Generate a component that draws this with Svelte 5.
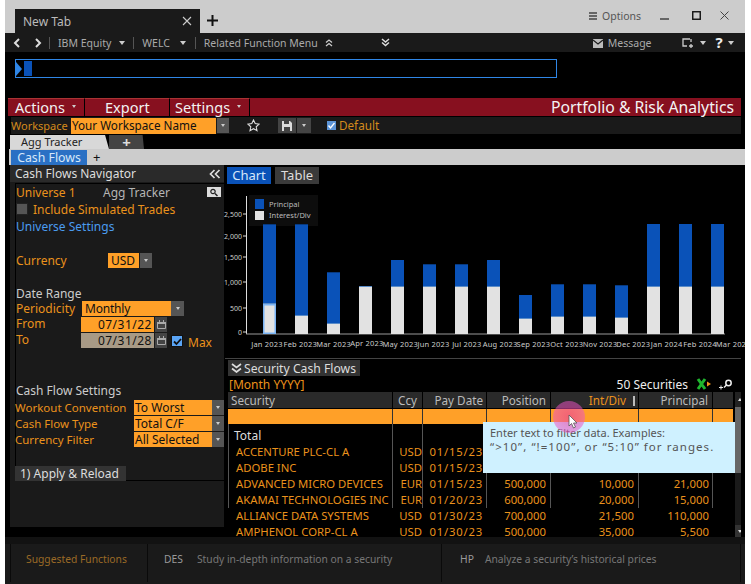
<script>
  const bars = [
    { m: 'Jan 2023', p: 110, i: 30, sel: true, dark: true },
    { m: 'Feb 2023', p: 110, i: 18, dark: true },
    { m: 'Mar 2023', p: 62, i: 10, dark: true },
    { m: 'Apr 2023', p: 48, i: 47, up: true },
    { m: 'May 2023', p: 74, i: 47 },
    { m: 'Jun 2023', p: 70, i: 47, dark: true },
    { m: 'Jul 2023', p: 70, i: 47, dark: true },
    { m: 'Aug 2023', p: 74, i: 47 },
    { m: 'Sep 2023', p: 39, i: 15 },
    { m: 'Oct 2023', p: 50, i: 17, dark: true },
    { m: 'Nov 2023', p: 50, i: 17, dark: true },
    { m: 'Dec 2023', p: 49, i: 16, dark: true },
    { m: 'Jan 2024', p: 110, i: 47 },
    { m: 'Feb 2024', p: 110, i: 47 },
    { m: 'Mar 2024', p: 110, i: 47 }
  ];
  const axis = [
    ['0', 148], ['500', 124], ['1,000', 98], ['1,500', 73], ['2,000', 52], ['2,500', 30]
  ];
  const base = 150;
  const rows = [
    ['ACCENTURE PLC-CL A', 'USD', '01/15/23', '', '', ''],
    ['ADOBE INC', 'USD', '01/15/23', '', '', ''],
    ['ADVANCED MICRO DEVICES', 'EUR', '01/15/23', '500,000', '10,000', '21,000'],
    ['AKAMAI TECHNOLOGIES INC', 'EUR', '01/20/23', '600,000', '20,000', '15,000'],
    ['ALLIANCE DATA SYSTEMS', 'USD', '01/30/23', '700,000', '21,500', '110,000'],
    ['AMPHENOL CORP-CL A', 'USD', '01/30/23', '500,000', '35,000', '5,500']
  ];
  const settings = [
    ['Workout Convention', 'To Worst'],
    ['Cash Flow Type', 'Total C/F'],
    ['Currency Filter', 'All Selected']
  ];
</script>

<div class="page">
  <div class="window">
    <div class="tabbar">
      <div class="tab">
        <span>New Tab</span>
        <svg class="x" viewBox="0 0 10 10" width="10" height="10"><path d="M1 1l8 8M9 1l-8 8" stroke="#ccc" stroke-width="1.100" fill="none" /></svg>
      </div>
      <svg class="newtab" viewBox="0 0 11 11" width="11" height="11"><path d="M5.500 0v11M0 5.500h11" stroke="#111" stroke-width="2" /></svg>
      <div class="winctl">
        <svg viewBox="0 0 8 8" width="8" height="8"><path d="M0 1h8M0 4h8M0 7h8" stroke="#444" stroke-width="1.600" /></svg>
        <span class="opt">Options</span>
        <svg class="min" viewBox="0 0 10 10" width="10" height="10"><path d="M0 7h9" stroke="#666" stroke-width="2" /></svg>
        <svg class="max" viewBox="0 0 9 9" width="9" height="9"><rect x="0.750" y="0.750" width="7.500" height="7.500" fill="none" stroke="#111" stroke-width="1.400" /></svg>
        <svg class="cl" viewBox="0 0 9 9" width="9" height="9"><path d="M.5.5l8 8M8.500.5l-8 8" stroke="#444" stroke-width="1" /></svg>
      </div>
    </div>

    <div class="nav">
      <svg viewBox="0 0 8 10" width="8" height="10"><path d="M6 1L2 5l4 4" stroke="#ddd" stroke-width="2" fill="none" /></svg>
      <svg class="n2" viewBox="0 0 8 10" width="8" height="10"><path d="M2 1l4 4-4 4" stroke="#ddd" stroke-width="2" fill="none" /></svg>
      <i class="sep s1"></i>
      <span class="ni">IBM Equity</span><b class="tri t-ibm"></b>
      <i class="sep s2"></i>
      <span class="ni">WELC</span><b class="tri t-welc"></b>
      <i class="sep s3"></i>
      <span class="ni">Related Function Menu</span>
      <svg class="chev" viewBox="0 0 8 8" width="8" height="8"><path d="M1 3.500L4 1l3 2.500M1 7L4 4.500 7 7" stroke="#ccc" stroke-width="1.300" fill="none" /></svg>
      <svg class="chev big" viewBox="0 0 9 9" width="9" height="9"><path d="M1 1l3.500 3L8 1M1 4.500l3.500 3 3.500-3" stroke="#ddd" stroke-width="1.500" fill="none" /></svg>
      <svg class="mail" viewBox="0 0 10 10" width="10" height="10"><path d="M0 1h10v9H0z" fill="#bbb" /><path d="M0 2l5 4 5-4" stroke="#1a1a1a" stroke-width="1.200" fill="none" /></svg>
      <span class="ni msg">Message</span>
      <svg class="share" viewBox="0 0 12 10" width="12" height="10"><path d="M8 1H1v7h4M9 1v3M7 8h4M9 6v4" stroke="#ccc" stroke-width="1.300" fill="none" /></svg>
      <b class="tri t2"></b>
      <span class="q">?</span>
      <b class="tri t3"></b>
    </div>

    <div class="cmd">
      <div class="cmdbox">
        <svg viewBox="0 0 7 14" width="7" height="14"><path d="M0 0l6 7-6 7z" fill="#2f86e6" /></svg>
        <i class="cursor"></i>
      </div>
    </div>

    <div class="redbar">
      <div class="rb act">Actions<b class="tri tw"></b></div>
      <div class="rb exp">Export</div>
      <div class="rb set">Settings<b class="tri tw"></b></div>
      <div class="title">Portfolio &amp; Risk Analytics</div>
    </div>

    <div class="wsbar">
      <span class="wl">Workspace</span>
      <span class="wname">Your Workspace Name</span>
      <span class="drop d13"><b class="tri tw"></b></span>
      <svg class="star" viewBox="0 0 13 13" width="13" height="13"><path d="M6.500 1l1.700 3.600 3.900.5-2.900 2.700.8 3.900-3.500-2-3.500 2 .8-3.900L.9 5.100l3.900-.5z" fill="none" stroke="#ddd" stroke-width="1.100" /></svg>
      <span class="save"><svg viewBox="0 0 10 10" width="10" height="10"><path d="M0 0h8l2 2v8H0z" fill="#ddd" /><path d="M2 0h5v3H2z" fill="#444" /><path d="M2 6h6v4H2z" fill="#444" /></svg></span>
      <span class="drop d14"><b class="tri tw"></b></span>
      <span class="chk"><svg viewBox="0 0 9 9" width="9" height="9"><path d="M1.500 4.500l2 2.500 4-5" stroke="#fff" stroke-width="1.300" fill="none" /></svg></span>
      <span class="def">Default</span>
    </div>

    <div class="tabs1">
      <div class="t1 on">Agg Tracker</div>
      <div class="t1 plus">+</div>
    </div>
    <div class="tabs2">
      <div class="cf">Cash Flows</div>
      <div class="cfplus">+</div>
    </div>

    <div class="main">
      <aside class="side">
        <div class="sidehead">
          <span>Cash Flows Navigator</span>
          <svg viewBox="0 0 12 10" width="12" height="10"><path d="M5.500 1L1.500 5l4 4M10.500 1l-4 4 4 4" stroke="#ddd" stroke-width="1.700" fill="none" /></svg>
        </div>
        <div class="sidebody">
          <div class="sr u1">
            <span class="or ul">Universe 1</span>
            <span class="agg">Agg Tracker</span>
            <span class="srch"><svg viewBox="0 0 10 9" width="10" height="9"><circle cx="4" cy="3.500" r="2.200" fill="none" stroke="#222" stroke-width="1.200" /><path d="M6 5.500l2.500 2.500" stroke="#222" stroke-width="1.500" /></svg></span>
          </div>
          <div class="sr inc"><i class="box"></i><span class="or">Include Simulated Trades</span></div>
          <div class="sr blue">Universe Settings</div>
          <div class="sr cur">
            <span class="or cl-l">Currency</span>
            <span class="ff usd">USD</span>
            <span class="drop d-usd"><b class="tri tw"></b></span>
          </div>
          <div class="sr grey dr">Date Range</div>
          <div class="sr per">
            <span class="or pl">Periodicity</span>
            <span class="ff mon">Monthly</span>
            <span class="drop d-mon"><b class="tri tw"></b></span>
          </div>
          <div class="sr dt">
            <span class="or lab">From</span>
            <span class="ff date">07/31/22</span>
            <span class="cal"><svg viewBox="0 0 9 9" width="9" height="9"><path d="M.5 2.500h8v6h-8z" fill="none" stroke="#aaa" /><path d="M0 2h9v2H0zM2 0h1v2H2zM6 0h1v2H6z" fill="#aaa" /></svg></span>
          </div>
          <div class="sr dt">
            <span class="or lab">To</span>
            <span class="ff date dis">07/31/28</span>
            <span class="cal"><svg viewBox="0 0 9 9" width="9" height="9"><path d="M.5 2.500h8v6h-8z" fill="none" stroke="#aaa" /><path d="M0 2h9v2H0zM2 0h1v2H2zM6 0h1v2H6z" fill="#aaa" /></svg></span>
            <span class="maxchk"><svg viewBox="0 0 9 9" width="9" height="9"><path d="M1 4.500l2.500 2.500L8 2" stroke="#111" stroke-width="1.800" fill="none" /></svg></span>
            <span class="or maxl">Max</span>
          </div>
          <div class="sr grey cfs">Cash Flow Settings</div>
          {#each settings as s}
            <div class="sr set3">
              <span class="or sl">{s[0]}</span>
              <span class="ff sv">{s[1]}</span>
              <span class="drop d-set"><b class="tri tw"></b></span>
            </div>
          {/each}
          <div class="apply">1) Apply &amp; Reload</div>
        </div>
      </aside>

      <section class="right">
        <div class="cttabs">
          <span class="ct on">Chart</span>
          <span class="ct">Table</span>
        </div>
        <svg class="chart" viewBox="0 0 520 174" width="520" height="174">
          <line x1="21.500" y1="12" x2="21.500" y2={base} stroke="#ddd" />
          <line x1="21" y1="150" x2="500" y2="150" stroke="#999" />
          {#each axis as a}
            <text x="17" y={a[1] + 2.500} class="ax" text-anchor="end">{a[0]}</text>
            <line x1="18" x2="21" y1={a[1]} y2={a[1]} stroke="#ddd" />
          {/each}
          <rect x="24" y="11" width="69" height="31" fill="#0d0d0d" />
          <rect x="30" y="15" width="9" height="10" fill="#0a52b8" />
          <rect x="30" y="27" width="9" height="9" fill="#e2e2e2" />
          <text x="44" y="22.500" class="lg">Principal</text>
          <text x="44" y="34" class="lg">Interest/Div</text>
          {#each bars as b, idx}
            {@const x = 38 + idx * 32}
            <rect x={x} y={base - b.p} width="13" height={b.p} fill="#0a52b8" />
            {#if b.dark}
              <rect x={x} y={base - b.p} width="13" height={1} fill="#083a80" />
            {/if}
            <rect x={x} y={base - b.i - 1} width="13" height="1" fill="#5a8cc8" />
            <rect x={x} y={base - b.i} width="13" height={b.i} fill="#e2e2e2" />
            {#if b.sel}
              <rect x={x + 0.750} y={base - b.i + 0.750} width="11.500" height={b.i - 1.500} fill="none" stroke="#7ab4f5" stroke-width="1.500" />
            {/if}
            <text x={42 + idx * 33.300} y={b.up ? 162 : 163} class="mo" text-anchor="middle">{b.m}</text>
          {/each}
        </svg>
        <div class="rule"></div>
        <div class="shead">
          <svg viewBox="0 0 11 10" width="11" height="10"><path d="M1 1l4.500 3.500L10 1M1 5.500L5.500 9 10 5.500" stroke="#ddd" stroke-width="1.700" fill="none" /></svg>
          <span>Security Cash Flows</span>
        </div>
        <div class="subbar">
          <span class="or">[Month YYYY]</span>
          <span class="cnt">50 Securities</span>
          <svg class="xl" viewBox="0 0 15 12" width="15" height="12"><path d="M2 1l7 10M9 1L2 11" stroke="#1fb52e" stroke-width="3" fill="none" /><path d="M11 3.500l4 2.500-4 2.500z" fill="#f0961e" /></svg>
          <svg class="zoom" viewBox="0 0 14 11" width="14" height="11"><circle cx="9.500" cy="4" r="2.700" fill="none" stroke="#eee" stroke-width="1.500" /><path d="M7.500 6L5 8.500" stroke="#eee" stroke-width="1.500" /><path d="M0 8.500h4M2 6.500v4" stroke="#eee" stroke-width="1" /></svg>
        </div>
        <div class="tablewrap">
          <div class="grid gh">
            <span class="c0">Security</span><span class="c1">Ccy</span><span class="c2">Pay Date</span><span class="c3">Position</span>
            <span class="c4 hot">Int/Div<i class="sort"></i></span><span class="c5">Principal</span><span class="c6"></span>
          </div>
          <div class="grid filter">
            <span class="c0"></span><span class="c1"></span><span class="c2"></span><span class="c3"></span><span class="c4"></span><span class="c5"></span><span class="c6"></span>
          </div>
          <div class="grid total">
            <span class="c0">Total</span><span class="c1"></span><span class="c2"></span><span class="c3"></span><span class="c4"></span><span class="c5"></span><span class="c6"></span>
          </div>
          {#each rows as r, i}
            <div class="grid row" class:open={i > 3}>
              <span class="c0">{r[0]}</span><span class="c1">{r[1]}</span><span class="c2">{r[2]}</span><span class="c3">{r[3]}</span><span class="c4">{r[4]}</span><span class="c5">{r[5]}</span><span class="c6"></span>
            </div>
          {/each}
          <div class="scroll">
            <div class="sbtn"><b class="up"></b></div>
            <i class="thumb"></i>
            <div class="strack"></div>
            <div class="sbtn low"><b class="dn"></b></div>
          </div>
          <div class="tip">Enter text to filter data. Examples:<br /><span class="tl2">“&gt;10”, “!=100”, or “5:10” for ranges.</span></div>
          <div class="halo"></div>
          <svg class="cursorarrow" viewBox="0 0 10 15" width="10" height="15"><path d="M1 1v11l2.500-2.500L5.500 14l2-1-2-4H9z" fill="#fff" stroke="#555" stroke-width="0.800" /></svg>
        </div>
      </section>
    </div>

    <div class="foot">
      <div class="fc f0">Suggested Functions</div>
      <div class="fc f1"><span class="code c-des">DES</span>Study in-depth information on a security</div>
      <div class="fc f2"><span class="code c-hp">HP</span>Analyze a security’s historical prices</div>
    </div>
  </div>
</div>

<style>
  :global(body) { margin: 0; background: #fff; }
  .page { width: 751px; height: 584px; overflow: hidden; padding-left: 5px; box-sizing: border-box; font-family: "Noto Sans", "Open Sans", sans-serif; }
  .window { width: 740px; height: 584px; background: #000; display: flex; flex-direction: column; overflow: hidden; color: #ddd; }
  svg { display: block; flex: none; }
  .tabbar { height: 33px; background: #ccc; display: flex; align-items: flex-end; flex: none; }
  .tab { margin-left: 10px; width: 185px; height: 24px; background: #1a1a1a; display: flex; align-items: center; justify-content: space-between; padding: 0 8px 0 8px; box-sizing: border-box; font-size: 12px; color: #bbb; flex: none; }
  .newtab { margin: 0 0 7px 7px; }
  .winctl { margin-left: auto; height: 33px; padding-bottom: 2px; box-sizing: border-box; display: flex; align-items: center; font-size: 10.500px; color: #555; }
  .opt { margin: 0 19px 0 5px; }
  .min { margin-right: 22px; margin-top: 2px; }
  .max { margin-right: 19px; }
  .cl { margin-right: 16px; }
  .nav { height: 19px; background: #1a1a1a; flex: none; display: flex; align-items: center; font-size: 10.500px; color: #aaa; padding-left: 8px; }
  .n2 { margin-left: 13px; }
  .sep { width: 1px; height: 12px; background: #555; display: block; flex: none; }
  .s1 { margin: 0 8px 0 7px; }
  .s2 { margin: 0 8px 0 8px; }
  .s3 { margin: 0 8px 0 9px; }
  .ni { white-space: nowrap; }
  .tri { width: 0; height: 0; border-left: 3.500px solid transparent; border-right: 3.500px solid transparent; border-top: 4px solid #ccc; display: block; flex: none; }
  .t-ibm { margin-left: 8px; }
  .t-welc { margin-left: 10px; }
  .chev { margin-left: 7px; }
  .chev.big { margin-left: 48px; }
  .mail { margin-left: 203px; }
  .msg { margin-left: 5px; }
  .share { margin-left: 30px; }
  .t2 { margin-left: 6px; }
  .q { font-size: 15px; font-weight: 700; color: #eee; margin-left: 10px; line-height: 15px; }
  .t3 { margin-left: 5px; }
  .cmd { height: 46px; flex: none; padding: 7px 0 0 10px; box-sizing: border-box; }
  .cmdbox { width: 542px; height: 19px; border: 1px solid #2f86e6; box-sizing: border-box; display: flex; align-items: center; gap: 1px; }
  .cursor { width: 8px; height: 15px; background: #0a52b8; display: block; }
  .redbar { height: 18px; margin: 0 4px 0 3px; background: #87101f; display: flex; align-items: center; flex: none; color: #f2f2f2; font-size: 14.500px; }
  .rb { height: 18px; display: flex; align-items: center; box-sizing: border-box; border-right: 1px solid #000; border-top: 1px solid #a33; padding-bottom: 2px; flex: none; }
  .tw { border-top-color: #ccc; border-left-width: 2.500px; border-right-width: 2.500px; border-top-width: 3px; }
  .act { width: 77px; padding-left: 7px; }
  .act .tri, .set .tri { margin-left: 7px; }
  .exp { width: 85px; padding-left: 20px; }
  .set { width: 80px; padding-left: 5px; }
  .title { margin-left: auto; font-size: 15.750px; padding-right: 7px; color: #f4f4f4; }
  .wsbar { height: 17px; margin: 1px 4px 0 6px; background: #1a1a1a; display: flex; align-items: center; flex: none; font-size: 11.700px; }
  .wl { color: #d48a1c; width: 60px; font-size: 11px; flex: none; }
  .wname { width: 145px; height: 16px; line-height: 15px; background: #ffa028; color: #111; padding-left: 1px; box-sizing: border-box; flex: none; }
  .drop { background: #555; display: flex; align-items: center; justify-content: center; flex: none; }
  .d13 { width: 12px; height: 15px; margin-left: 1px; }
  .star { margin-left: 18px; }
  .save { width: 18px; height: 15px; background: #444; margin-left: 18px; display: flex; align-items: center; justify-content: center; flex: none; }
  .d14 { width: 14px; height: 15px; margin-left: 1px; background: #444; }
  .chk { width: 9px; height: 9px; background: #5b93d6; margin-left: 16px; display: flex; flex: none; }
  .def { color: #d48a1c; margin-left: 3px; line-height: 15px; padding-bottom: 1px; }
  .tabs1 { height: 15px; display: flex; align-items: flex-end; padding-left: 5px; flex: none; }
  .t1 { height: 14px; line-height: 13px; font-size: 11px; clip-path: polygon(0 0, 96% 0, 100% 100%, 0 100%); }
  .t1.on { width: 99px; background: #d8d8d8; color: #222; padding-left: 11px; box-sizing: border-box; }
  .t1.plus { width: 35px; background: #444; color: #ddd; text-align: center; font-size: 15px; font-weight: 700; line-height: 14px; }
  .tabs2 { height: 16px; background: #ccc; display: flex; align-items: center; flex: none; margin-left: 4px; }
  .cf { width: 76px; height: 15px; line-height: 15px; background: #2a70c4; color: #d7e8fa; text-align: center; font-size: 12.300px; margin-left: 2px; margin-top: 1px; }
  .cfplus { margin-left: 6px; font-size: 13px; color: #111; }
  .main { display: flex; flex: none; height: 372px; }
  .side { width: 214px; margin-left: 5px; background: #1a1a1a; height: 362px; flex: none; font-size: 12px; }
  .sidehead { height: 17px; background: #2a2a2a; display: flex; align-items: center; justify-content: space-between; padding: 0 3px 0 5px; color: #ddd; }
  .sidebody { height: 298px; margin: 1px 0 0 5px; border-left: 1px solid #000; border-top: 1px solid #000; border-bottom: 1px solid #000; box-sizing: border-box; }
  .or { color: #ea921c; white-space: nowrap; }
  .sr { display: flex; align-items: center; height: 18px; }
  .u1 { height: 16px; }
  .ul { width: 87px; flex: none; }
  .agg { color: #b5b5b5; }
  .srch { margin-left: auto; margin-right: 3px; width: 14px; height: 10px; background: #ddd; display: flex; align-items: center; justify-content: center; }
  .box { width: 12px; height: 12px; background: #555; border: 1px solid #222; box-sizing: border-box; margin-right: 5px; display: block; }
  .blue { color: #4a9cf0; height: 17px; }
  .cur { margin-top: 18px; height: 15px; }
  .cl-l { width: 92px; flex: none; }
  .ff { background: #ffa028; color: #111; box-sizing: border-box; display: block; flex: none; }
  .usd { width: 31px; height: 15px; line-height: 15px; padding-left: 3px; }
  .d-usd { width: 12px; height: 15px; margin-left: 1px; }
  .dr { margin-top: 17px; color: #ccc; height: 16px; }
  .per { height: 15px; }
  .pl { width: 66px; flex: none; }
  .mon { width: 89px; height: 15px; line-height: 15px; padding-left: 3px; letter-spacing: -0.2px; }
  .d-mon { width: 13px; height: 15px; }
  .dt { height: 16px; align-items: flex-start; }
  .lab { width: 65px; line-height: 15px; flex: none; }
  .date { width: 73px; height: 15px; line-height: 15px; text-align: right; padding-right: 2px; margin-top: 1px; letter-spacing: 0.5px; }
  .dis { background: #a89a86; }
  .cal { width: 12px; height: 15px; margin: 1px 0 0 1px; background: #444; display: flex; align-items: center; justify-content: center; }
  .maxchk { width: 12px; height: 12px; background: #5aa5f5; border: 1px solid #111; box-sizing: border-box; margin: 3px 0 0 4px; display: flex; align-items: center; justify-content: center; }
  .maxchk svg { width: 9px; height: 9px; }
  .maxl { margin: 2px 0 0 5px; }
  .cfs { margin-top: 34px; color: #ccc; padding-bottom: 2px; box-sizing: border-box; }
  .set3 { height: 16px; }
  .sl { width: 119px; margin-left: -1px; font-size: 11.500px; flex: none; padding-bottom: 1px; }
  .sv { width: 78px; height: 15px; line-height: 15px; padding-left: 1px; margin-bottom: 1px; white-space: nowrap; }
  .d-set { width: 12px; height: 15px; margin-bottom: 1px; }
  .apply { width: 111px; height: 15px; line-height: 15px; background: #333; margin: 18px 0 0 -1px; padding-left: 5px; box-sizing: border-box; color: #ddd; }
  .right { width: 516px; margin-left: 1px; flex: none; display: flex; flex-direction: column; }
  .cttabs { height: 19px; padding: 2px 0 0 2px; display: flex; gap: 4px; box-sizing: border-box; flex: none; font-size: 13px; }
  .ct { width: 44px; height: 17px; line-height: 17px; text-align: center; background: #3a3a3a; color: #ddd; }
  .ct.on { background: #0a52b8; color: #d7e8fa; }
  .chart { overflow: visible; }
  .ax { font-size: 7px; fill: #ccc; font-family: "Noto Sans", sans-serif; }
  .lg { font-size: 7.500px; fill: #bbb; font-family: "Noto Sans", sans-serif; }
  .mo { font-size: 7.500px; letter-spacing: 0.2px; fill: #ccc; font-family: "Noto Sans", sans-serif; }
  .rule { height: 1px; background: #444; flex: none; }
  .shead { margin: 1px 0 0 3px; width: 132px; height: 16px; background: #333; display: flex; align-items: center; gap: 2px; padding-left: 3px; box-sizing: border-box; font-size: 12.200px; flex: none; color: #ddd; white-space: nowrap; }
  .subbar { height: 16px; display: flex; align-items: center; font-size: 12px; padding-left: 4px; flex: none; }
  .cnt { margin-left: auto; color: #eee; }
  .xl { margin-left: 8px; }
  .zoom { margin: 0 8px 0 8px; }
  .tablewrap { position: relative; height: 145px; overflow: hidden; flex: none; font-size: 11.300px; }
  .grid { display: grid; grid-template-columns: 165px 30px 64px 64px 88px 74px 20px; width: 505px; margin-left: 3px; box-sizing: border-box; }
  .grid span { display: block; box-sizing: border-box; white-space: nowrap; border-right: 1px solid #555; padding: 0 4px 0 3px; text-align: right; }
  .grid .c0 { text-align: left; border-left: 1px solid #555; }
  .grid .c6 { border-right: 0; }
  .gh { height: 17px; line-height: 16px; background: #2a2a2a; color: #bbb; border-bottom: 1px solid #000; font-size: 11.700px; }
  .gh span { border-right-color: #000; }
  .gh .c0 { padding-left: 3px; border-left: 0; }
  .gh .c1 { text-align: center; padding: 0; }
  .gh .c2 { padding-right: 3px; }
  .gh .hot { color: #ea921c; padding-right: 3px; }
  .sort { display: inline-block; width: 2px; height: 10px; background: #bbb; vertical-align: -1px; margin-left: 7px; }
  .filter { height: 15px; background: #ffa028; }
  .filter span { border-right-color: #333; }
  .filter .c0 { border-left: 0; }
  .total { height: 20px; line-height: 24px; color: #ddd; font-size: 12px; }
  .total .c0 { padding-left: 5px; }
  .row { height: 16px; line-height: 16px; color: #ea921c; }
  .row .c0 { padding-left: 7px; overflow: hidden; }
  .row .c1 { padding: 0; }
  .row .c2 { letter-spacing: 0.8px; padding-right: 3px; }
  .row .c5 { padding-right: 3px; }
  .row.open span { border-color: transparent; }
  .scroll { position: absolute; right: -4px; top: 0; width: 10px; height: 145px; background: #1a1a1a; display: flex; flex-direction: column; }
  .sbtn { height: 15px; background: #222; display: flex; align-items: center; justify-content: center; flex: none; }
  .sbtn.low { height: 12px; background: #333; }
  .scroll b { width: 0; height: 0; border-left: 2.500px solid transparent; border-right: 2.500px solid transparent; display: block; }
  .up { border-bottom: 3px solid #ddd; }
  .dn { border-top: 3px solid #ddd; }
  .thumb { height: 66px; background: #666; display: block; flex: none; }
  .strack { flex: 1; }
  .tip { position: absolute; left: 258px; top: 30px; width: 252px; height: 51px; background: #cff1ff; color: #555; font-size: 11px; line-height: 14px; padding: 4px 7px; box-sizing: border-box; white-space: nowrap; }
  .tl2 { font-size: 11.500px; letter-spacing: 1.050px; }
  .halo { position: absolute; left: 328px; top: 9px; width: 32px; height: 32px; border-radius: 50%; background: radial-gradient(circle, rgba(235, 60, 160, 0.62), rgba(235, 100, 220, 0.48)); }
  .cursorarrow { position: absolute; left: 343px; top: 22px; }
  .foot { flex: 1; display: flex; background: #1a1a1a; border-top: 7px solid #121212; font-size: 10.300px; color: #777; }
  .fc { display: flex; align-items: center; box-sizing: border-box; border-left: 1px solid #0a0a0a; white-space: nowrap; height: 38px; flex: none; padding-bottom: 8px; }
  .f0 { width: 137px; margin-left: 5px; padding-left: 15px; color: #9a6a26; }
  .f1 { width: 294px; padding-left: 16px; }
  .f2 { width: 300px; padding-left: 18px; border-right: 1px solid #0a0a0a; }
  .code { color: #999; }
  .c-des { margin-right: 14px; }
  .c-hp { margin-right: 11px; }
</style>
